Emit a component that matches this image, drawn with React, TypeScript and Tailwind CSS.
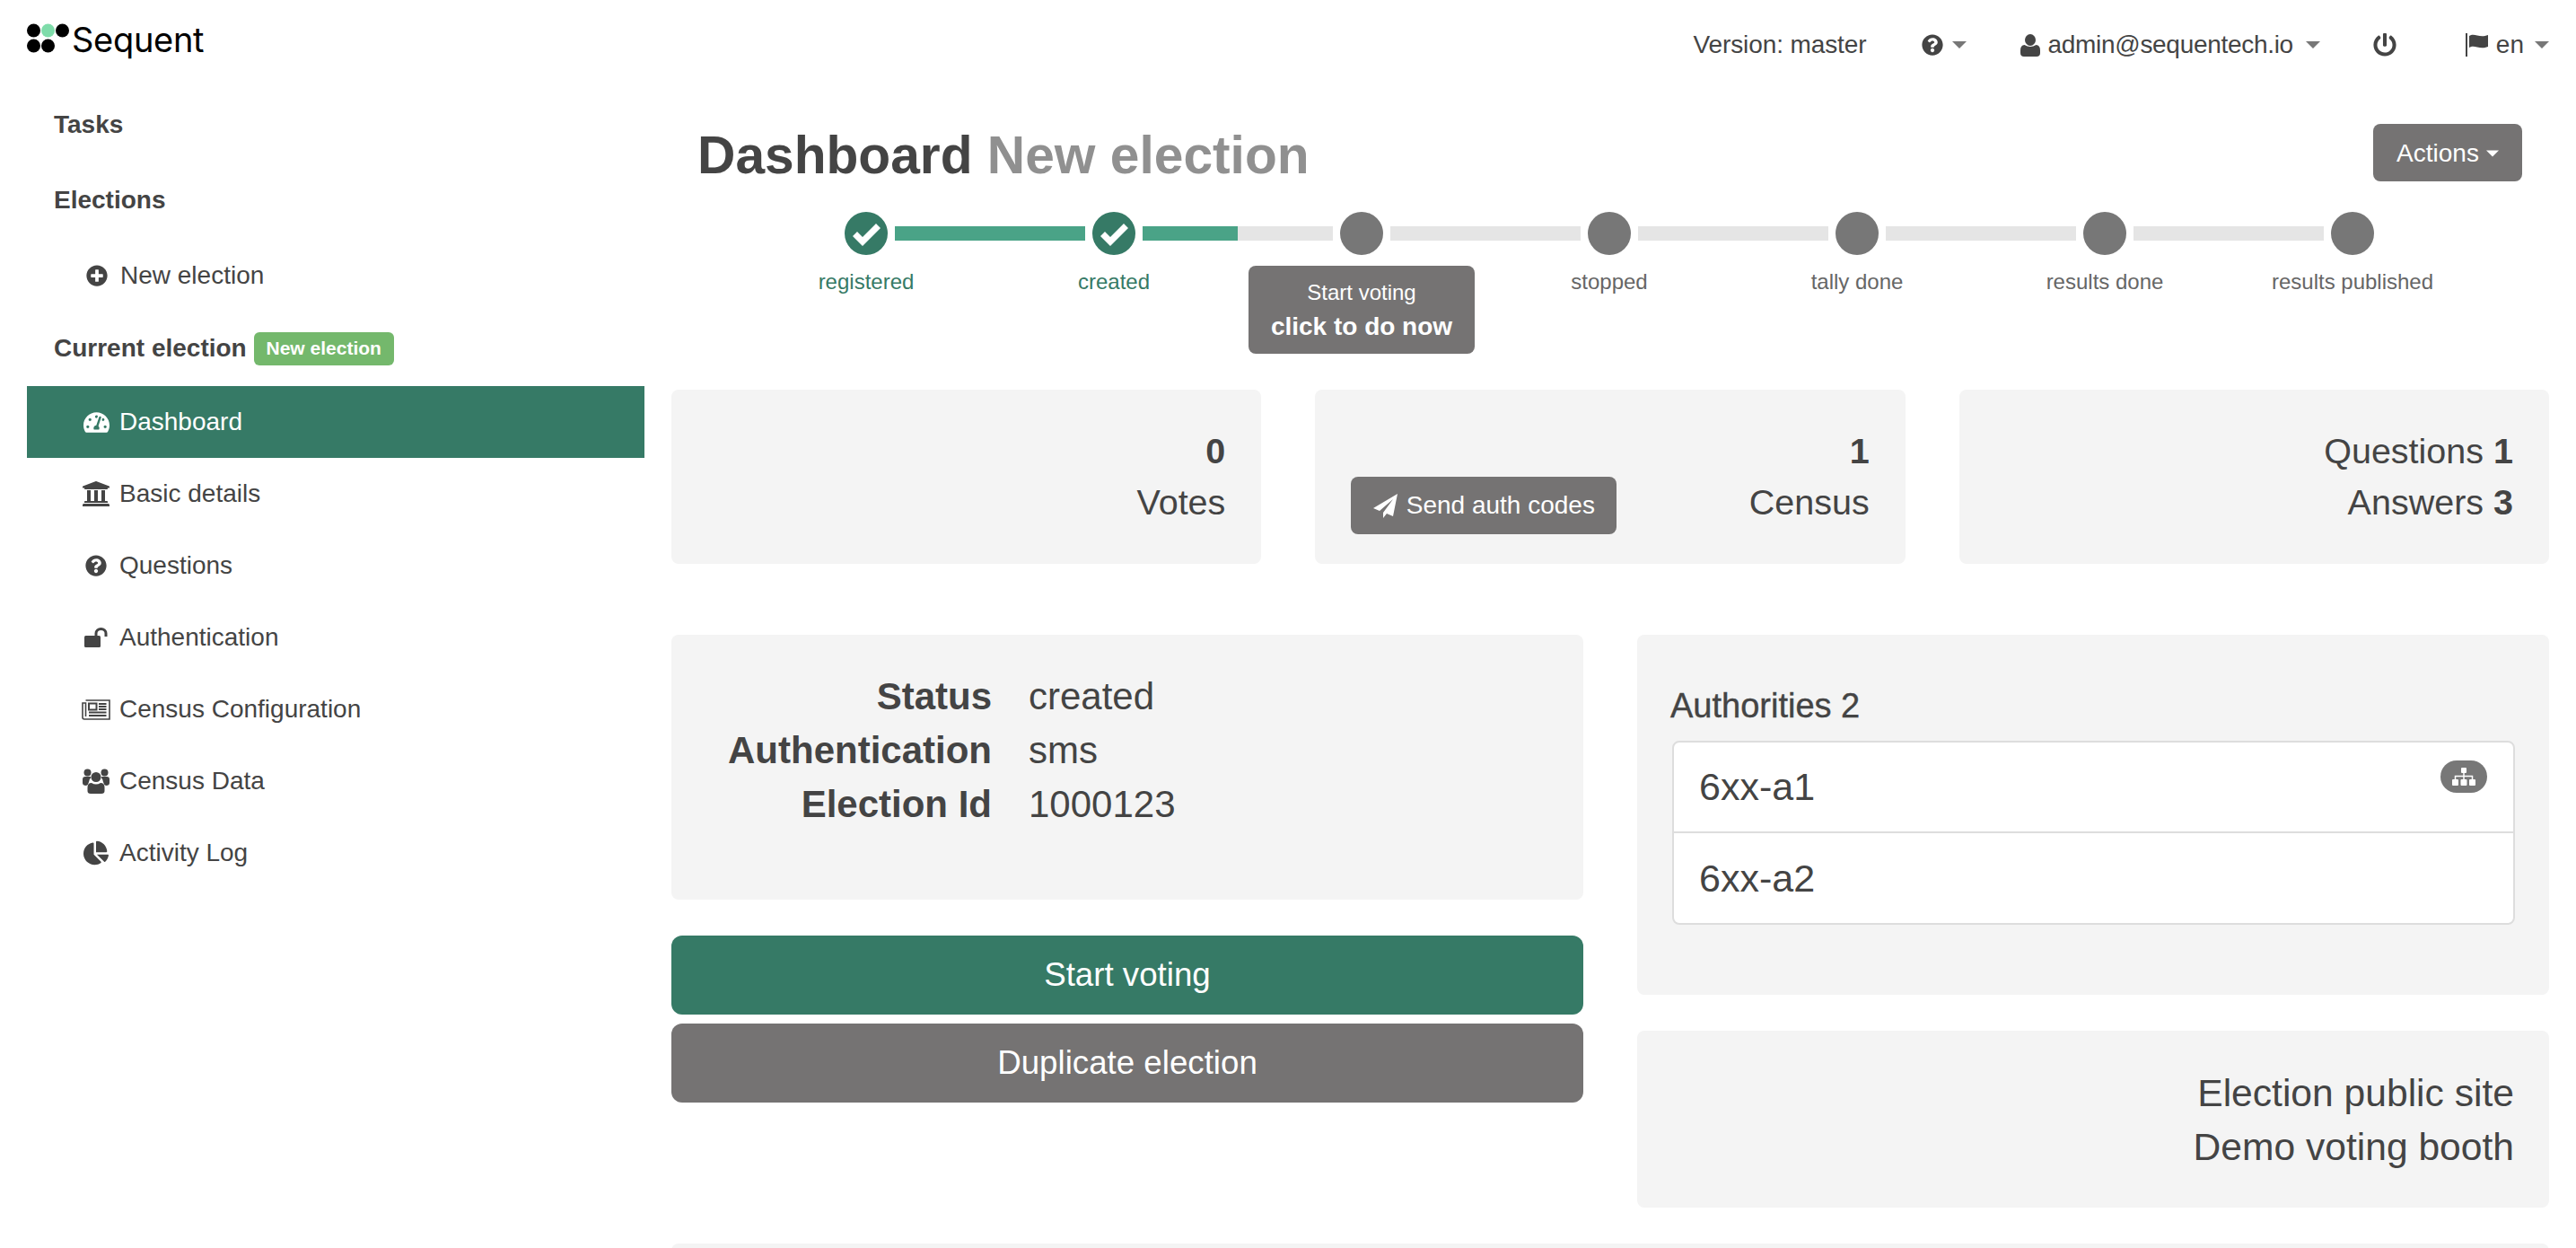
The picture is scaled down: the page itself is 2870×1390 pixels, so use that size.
import React from "react";
import { FaPlusCircle, FaTachometerAlt, FaUniversity, FaQuestionCircle, FaChartPie, FaPowerOff } from "react-icons/fa";

const Caret = ({ className = "" }: { className?: string }) => (
  <svg width="16" height="8" viewBox="0 0 16 8" className={className}>
    <polygon points="0,0 16,0 8,8" fill="currentColor" />
  </svg>
);

const UnlockIcon = () => (
  <svg width="28" height="22" viewBox="0 0 28 22">
    <rect x="1" y="9" width="18" height="13" rx="1.5" fill="currentColor" />
    <path d="M14 10 V6.5 A5.5 5 0 0 1 25 6.5 V10" fill="none" stroke="currentColor" strokeWidth="3" />
  </svg>
);

const NewsIcon = () => (
  <svg width="32" height="23" viewBox="0 0 32 23" fill="none" stroke="currentColor" strokeWidth="1.6">
    <path d="M4.5 1 H31 V22 H3 Q1 22 1 20 V4 H4.5 V19" />
    <rect x="8" y="4.5" width="8.5" height="7" strokeWidth="2" />
    <path d="M19 5 H27.5 M19 8 H27.5 M19 11 H27.5 M8 14.5 H27.5 M8 18 H27.5" strokeWidth="1.8" />
  </svg>
);

const UsersIcon = () => (
  <svg width="30" height="28" viewBox="0 0 30 28" fill="currentColor">
    <circle cx="5.5" cy="4.5" r="4" />
    <circle cx="24.5" cy="4.5" r="4" />
    <path d="M0 16 V12 Q0 9 3 9 H8 Q9 9 9.5 10 Q7 12 7 15 Q6.5 18 4 19 Q0 19 0 16 Z" />
    <path d="M30 16 V12 Q30 9 27 9 H22 Q21 9 20.5 10 Q23 12 23 15 Q23.5 18 26 19 Q30 19 30 16 Z" />
    <circle cx="15" cy="9.5" r="5.5" />
    <path d="M5.5 25 V21 Q5.5 16 10 16 Q15 19 20 16 Q24.5 16 24.5 21 V25 Q24.5 28 21 28 H9 Q5.5 28 5.5 25 Z" />
  </svg>
);

const UserIcon = () => (
  <svg width="22" height="25" viewBox="0 0 22 25" fill="currentColor">
    <ellipse cx="11" cy="6.5" rx="6" ry="6.5" />
    <path d="M0 21 V18 Q0 12.5 4.5 12 Q11 16 17.5 12 Q22 12.5 22 18 V21 Q22 25 18 25 H4 Q0 25 0 21 Z" />
  </svg>
);

const FlagIcon = () => (
  <svg width="25" height="26" viewBox="0 0 25 26" fill="currentColor">
    <rect x="0" y="0" width="2" height="26" />
    <path d="M4 3 C10 -1 15 6 25 2 V15 C15 19 10 12 4 16 Z" />
  </svg>
);

const PlaneIcon = () => (
  <svg width="27" height="27" viewBox="0 0 27 27" fill="currentColor">
    <path d="M27 0 L0 16 L7 19 L22 6 L11 21 V27 L15 22 L22 25 Z" />
  </svg>
);

const SitemapIcon = () => (
  <svg width="26" height="20" viewBox="0 0 26 20" fill="#fff">
    <rect x="10" y="0" width="6" height="6" rx="1" />
    <path d="M13 6 V13 M3.5 13 V9.5 H22.5 V13" stroke="#fff" strokeWidth="1.5" fill="none" />
    <rect x="0" y="13" width="7" height="7" rx="1" />
    <rect x="9.5" y="13" width="7" height="7" rx="1" />
    <rect x="19" y="13" width="7" height="7" rx="1" />
  </svg>
);

const Logo = () => (
  <div className="flex items-center">
    <svg width="52" height="36" viewBox="0 0 52 36" className="shrink-0">
      <circle cx="7.5" cy="8" r="7.5" fill="#000" />
      <circle cx="23.5" cy="8" r="7.5" fill="#7fdcaa" />
      <circle cx="39.5" cy="8" r="7.5" fill="#000" />
      <circle cx="7.5" cy="25" r="7.5" fill="#000" />
      <circle cx="23.5" cy="25" r="7.5" fill="#000" />
    </svg>
    <span className="-ml-[2px] text-[38px] leading-none text-black tracking-[-0.3px] font-['Inter',sans-serif]">Sequent</span>
  </div>
);

const Header = () => (
  <header className="flex h-[97px] justify-between items-start pl-[30px] pr-[30px] text-[#444]">
    <div className="pt-[25px]"><Logo /></div>
    <div className="flex items-center h-[100px] text-[28px] leading-none">
      <span className="tracking-[-0.1px]">Version: master</span>
      <FaQuestionCircle className="ml-[61px] text-[24px]" />
      <Caret className="ml-[10px] text-[#777]" />
      <span className="ml-[60px]"><UserIcon /></span>
      <span className="ml-[9px] tracking-[-0.3px]">admin@sequentech.io</span>
      <Caret className="ml-[14px] text-[#777]" />
      <FaPowerOff className="ml-[59px] text-[26px]" />
      <span className="ml-[77px]"><FlagIcon /></span>
      <span className="ml-[9px]">en</span>
      <Caret className="ml-[12px] text-[#777]" />
    </div>
  </header>
);

const navItems = [
  { label: "Dashboard", icon: <FaTachometerAlt className="text-[29px]" />, active: true },
  { label: "Basic details", icon: <FaUniversity className="text-[32px]" /> },
  { label: "Questions", icon: <FaQuestionCircle className="text-[24px]" /> },
  { label: "Authentication", icon: <UnlockIcon /> },
  { label: "Census Configuration", icon: <NewsIcon /> },
  { label: "Census Data", icon: <UsersIcon /> },
  { label: "Activity Log", icon: <FaChartPie className="text-[28px]" /> },
];

const Sidebar = () => (
  <aside className="w-[688px] ml-[30px] shrink-0 text-[28px] text-[#444]">
    <div className="h-[84px] flex items-center pl-[30px] font-bold">Tasks</div>
    <div className="h-[84px] flex items-center pl-[30px] font-bold">Elections</div>
    <div className="h-[84px] flex items-center pl-[62px]">
      <span className="w-[32px] flex justify-center"><FaPlusCircle className="text-[24px]" /></span>
      <span className="ml-[10px]">New election</span>
    </div>
    <div className="h-[81px] flex items-center pl-[30px] pb-[3px]">
      <span className="font-bold">Current election</span>
      <span className="ml-[8px] h-[37px] w-[156px] flex items-center justify-center rounded-[6px] bg-[#74b86c] text-white text-[21px] font-bold">New election</span>
    </div>
    {navItems.map((n) => (
      <div key={n.label} className={`h-[80px] flex items-center pl-[62px] ${n.active ? "bg-[#367a66] text-white" : ""}`}>
        <span className="w-[32px] flex justify-center -ml-[1px]">{n.icon}</span>
        <span className="ml-[10px]">{n.label}</span>
      </div>
    ))}
  </aside>
);

const Done = () => (
  <svg width="48" height="48" viewBox="0 0 48 48" className="shrink-0">
    <circle cx="24" cy="24" r="24" fill="#367a66" />
    <path d="M9 27 L14 22 L20 28 L35 13 L40 18 L20 38 Z" fill="#fff" />
  </svg>
);
const Dot = () => <div className="w-[48px] h-[48px] rounded-full bg-[#777] shrink-0" />;

const Stepper = () => (
  <div>
    <div className="ml-[193px] w-[1704px] flex items-center">
      <Done />
      <div className="mx-[8px] w-[212px] h-[16px] bg-[#4aa387]" />
      <Done />
      <div className="mx-[8px] w-[212px] h-[16px] bg-[#e5e5e5] flex"><div className="w-[106px] bg-[#4aa387]" /></div>
      <Dot />
      <div className="mx-[8px] w-[212px] h-[16px] bg-[#e5e5e5]" />
      <Dot />
      <div className="mx-[8px] w-[212px] h-[16px] bg-[#e5e5e5]" />
      <Dot />
      <div className="mx-[8px] w-[212px] h-[16px] bg-[#e5e5e5]" />
      <Dot />
      <div className="mx-[8px] w-[212px] h-[16px] bg-[#e5e5e5]" />
      <Dot />
    </div>
    <div className="mt-[12px] ml-[79px] flex h-[138px] items-start text-[24px] leading-[36px] text-center">
      <div className="w-[276px] text-[#367a66]">registered</div>
      <div className="w-[276px] text-[#367a66]">created</div>
      <div className="w-[276px] flex justify-center">
        <div className="w-[252px] h-[98px] rounded-[8px] bg-[#757373] text-white flex flex-col items-center pt-[11px]">
          <span className="leading-[38px]">Start voting</span>
          <span className="text-[28px] leading-[38px] font-bold">click to do now</span>
        </div>
      </div>
      <div className="w-[276px] text-[#666]">stopped</div>
      <div className="w-[276px] text-[#666]">tally done</div>
      <div className="w-[276px] text-[#666]">results done</div>
      <div className="w-[276px] text-[#666]">results published</div>
    </div>
  </div>
);

const Card = ({ className = "", children }: { className?: string; children: React.ReactNode }) => (
  <div className={`bg-[#f4f4f4] rounded-[8px] ${className}`}>{children}</div>
);

const Main = () => (
  <main className="w-[2092px] ml-[30px] shrink-0 text-[#444]">
    <div className="h-[139px] flex justify-between items-start pt-[41px] pl-[29px] pr-[30px]">
      <h1 className="text-[58.7px] leading-[70px] font-bold whitespace-nowrap">
        Dashboard <span className="text-[#909090]">New election</span>
      </h1>
      <button className="w-[166px] h-[64px] pt-[2px] rounded-[8px] bg-[#757373] text-white text-[28px] flex items-center justify-center gap-[8px]">
        Actions <Caret className="w-[14px]" />
      </button>
    </div>
    <Stepper />
    <div className="grid grid-cols-3 gap-x-[60px] text-[39.5px] leading-[57px]">
      <Card className="h-[194px] p-[40px] text-right">
        <div className="font-bold">0</div>
        <div>Votes</div>
      </Card>
      <Card className="h-[194px] pt-[40px] px-[40px] flex justify-between items-start">
        <button className="mt-[57px] h-[64px] w-[296px] rounded-[8px] bg-[#757373] text-white text-[28px] leading-none flex items-center justify-center gap-[10px]">
          <PlaneIcon /> Send auth codes
        </button>
        <div className="text-right">
          <div className="font-bold">1</div>
          <div>Census</div>
        </div>
      </Card>
      <Card className="h-[194px] p-[40px] text-right">
        <div>Questions <b>1</b></div>
        <div>Answers <b>3</b></div>
      </Card>
    </div>
    <div className="grid grid-cols-2 gap-x-[60px] mt-[79px] items-start">
      <div>
        <Card className="h-[295px] pt-[39px] grid grid-cols-[357px_1fr] gap-x-[41px] content-start text-[42px] leading-[60px]">
          <div className="font-bold text-right">Status</div><div>created</div>
          <div className="font-bold text-right">Authentication</div><div>sms</div>
          <div className="font-bold text-right">Election Id</div><div>1000123</div>
        </Card>
        <button className="mt-[40px] w-full h-[88px] rounded-[12px] bg-[#367a66] text-white text-[36.7px]">Start voting</button>
        <button className="mt-[10px] w-full h-[88px] rounded-[12px] bg-[#757373] text-white text-[36.7px]">Duplicate election</button>
      </div>
      <div>
        <Card className="h-[401px] pt-[55px] pl-[39px] pr-[38px]">
          <div className="text-[38px] leading-[48px] -ml-[2px] [-webkit-text-stroke:0.4px_#444]">Authorities 2</div>
          <div className="mt-[15px] border-2 border-[#dddddd] rounded-[8px] bg-white text-[43px]">
            <div className="h-[101px] flex items-center justify-between pl-[28px] pr-[29px] border-b-2 border-[#dddddd] relative">
              <span>6xx-a1</span>
              <span className="absolute right-[29px] top-[20px] w-[52px] h-[36px] rounded-full bg-[#777] flex items-center justify-center">
                <SitemapIcon />
              </span>
            </div>
            <div className="h-[100px] flex items-center pl-[28px]">6xx-a2</div>
          </div>
        </Card>
        <Card className="mt-[40px] h-[197px] pt-[39px] pr-[39px] text-right text-[42.6px] leading-[60px]">
          <div>Election public site</div>
          <div>Demo voting booth</div>
        </Card>
      </div>
    </div>
    <Card className="mt-[40px] h-[40px]"><span /></Card>
  </main>
);

export default function App() {
  return (
    <div className="w-[2870px] h-[1390px] overflow-hidden bg-white font-['Liberation_Sans',Arial,sans-serif]">
      <Header />
      <div className="flex">
        <Sidebar />
        <Main />
      </div>
    </div>
  );
}
